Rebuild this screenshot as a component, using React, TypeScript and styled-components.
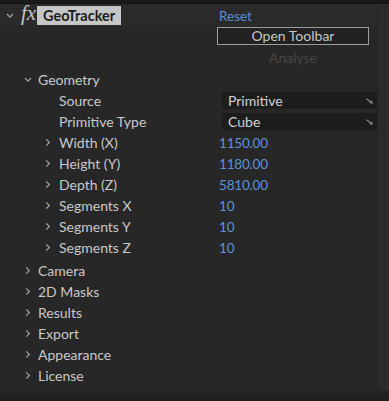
import styled, { createGlobalStyle } from "styled-components";

const GlobalStyle = createGlobalStyle`
  html, body {
    margin: 0;
    padding: 0;
    background: #1f1f1f;
  }
  * {
    box-sizing: border-box;
  }
`;

type Prop = {
  label: string;
  depth: number;
  twirl?: boolean;
  open?: boolean;
  value?: string;
  menu?: string;
};

const geometry: Prop[] = [
  { label: "Source", depth: 2, menu: "Primitive" },
  { label: "Primitive Type", depth: 2, menu: "Cube" },
  { label: "Width (X)", depth: 2, twirl: true, value: "1150.00" },
  { label: "Height (Y)", depth: 2, twirl: true, value: "1180.00" },
  { label: "Depth (Z)", depth: 2, twirl: true, value: "5810.00" },
  { label: "Segments X", depth: 2, twirl: true, value: "10" },
  { label: "Segments Y", depth: 2, twirl: true, value: "10" },
  { label: "Segments Z", depth: 2, twirl: true, value: "10" },
];

const groups = ["Camera", "2D Masks", "Results", "Export", "Appearance", "License"];

const Chevron = ({ open }: { open?: boolean }) => (
  <svg width="8" height="9" viewBox="0 0 8 9">
    {open ? (
      <path d="M1 3 L4 6.2 L7 3" fill="none" stroke="#a3a3a3" strokeWidth="1.2" />
    ) : (
      <path d="M2.2 1.3 L5.4 4.5 L2.2 7.7" fill="none" stroke="#a3a3a3" strokeWidth="1.2" />
    )}
  </svg>
);

const MenuMark = () => (
  <svg width="7" height="6" viewBox="0 0 7 6">
    <path d="M0.5 0.8 L6 5" fill="none" stroke="#8a8a8a" strokeWidth="1.3" />
    <path d="M3.5 4.6 L6.3 5.2 L5.6 2.6" fill="none" stroke="#8a8a8a" strokeWidth="1" />
  </svg>
);

const Row = ({ p }: { p: Prop }) => (
  <PropRow>
    <LabelCell $depth={p.depth}>
      <Twirl $depth={p.depth}>{p.twirl && <Chevron open={p.open} />}</Twirl>
      <LabelText>{p.label}</LabelText>
    </LabelCell>
    <ValueCell>
      {p.menu && (
        <Dropdown>
          <span>{p.menu}</span>
          <MenuMark />
        </Dropdown>
      )}
      {p.value && <Number>{p.value}</Number>}
    </ValueCell>
  </PropRow>
);

const App = () => {
  return (
    <>
      <GlobalStyle />
      <Frame>
        <TopStrip />
        <Body>
          <Main>
            <Header>
              <HeaderLeft>
                <HeaderTwirl>
                  <Chevron open />
                </HeaderTwirl>
                <Fx>fx</Fx>
                <EffectName>GeoTracker</EffectName>
              </HeaderLeft>
              <ValueCell>
                <Reset>Reset</Reset>
              </ValueCell>
            </Header>
            <ButtonRow>
              <ToolbarButton>Open Toolbar</ToolbarButton>
            </ButtonRow>
            <ButtonRow>
              <DisabledButton>Analyse</DisabledButton>
            </ButtonRow>
            <Props>
              <Row p={{ label: "Geometry", depth: 1, twirl: true, open: true }} />
              {geometry.map((p) => (
                <Row key={p.label} p={p} />
              ))}
              <Groups>
                {groups.map((g) => (
                  <Row key={g} p={{ label: g, depth: 1, twirl: true }} />
                ))}
              </Groups>
            </Props>
          </Main>
          <ScrollTrack />
        </Body>
        <BottomShade />
      </Frame>
    </>
  );
};

const Frame = styled.div`
  width: 389px;
  height: 401px;
  display: flex;
  flex-direction: column;
  background: #272727;
  font-family: Lato, "Noto Sans", sans-serif;
  color: #c9c9c9;
  overflow: hidden;
`;

const TopStrip = styled.div`
  height: 4px;
  background: #191919;
  border-bottom: 1px solid #141414;
`;

const Body = styled.div`
  flex: 1;
  display: flex;
`;

const Main = styled.div`
  flex: 1;
  display: flex;
  flex-direction: column;
`;

const ScrollTrack = styled.div`
  width: 12px;
  background: #2b2b2b;
  border-left: 1px solid #252525;
`;

const BottomShade = styled.div`
  height: 10px;
  background: linear-gradient(#232323, #1e1e1e);
`;

const Header = styled.div`
  display: grid;
  grid-template-columns: 218px 1fr;
  height: 22px;
  align-items: center;
  background: #2a2a2a;
`;

const HeaderLeft = styled.div`
  display: flex;
  align-items: center;
  height: 100%;
`;

const HeaderTwirl = styled.span`
  width: 21px;
  padding-left: 6px;
  display: flex;
  align-items: center;
`;

const Fx = styled.span`
  font-family: "Liberation Serif", serif;
  font-style: italic;
  font-size: 21px;
  color: #c4c4c4;
  width: 16px;
  line-height: 1;
  margin-top: -3px;
`;

const EffectName = styled.span`
  height: 19px;
  padding: 0 6px;
  background: #c6c6c6;
  color: #1c1c1c;
  font-weight: 700;
  font-size: 14.5px;
  line-height: 19px;
`;

const ValueCell = styled.div`
  display: flex;
  align-items: center;
  height: 100%;
  padding-left: 1px;
`;

const Reset = styled.span`
  color: #5b8fd3;
  font-size: 13.5px;
  margin-top: 2px;
`;

const ButtonRow = styled.div`
  padding-left: 217px;
  height: 22px;
  display: flex;
  align-items: center;
`;

const ToolbarButton = styled.div`
  width: 152px;
  height: 18px;
  margin-top: -3px;
  border: 1.5px solid #9d9d9d;
  background: #212121;
  color: #c6c6c6;
  font-size: 14px;
  line-height: 15px;
  text-align: center;
`;

const DisabledButton = styled.div`
  width: 152px;
  color: #454545;
  font-size: 14px;
  text-align: center;
  margin-top: -3px;
`;

const Props = styled.div`
  display: flex;
  flex-direction: column;
  margin-top: -1px;
`;

const Groups = styled.div`
  display: flex;
  flex-direction: column;
  margin-top: 2px;
`;

const PropRow = styled.div`
  display: grid;
  grid-template-columns: 218px 1fr;
  height: 21px;
  align-items: center;
`;

const LabelCell = styled.div<{ $depth: number }>`
  display: flex;
  align-items: center;
  padding-left: ${(p) => (p.$depth === 1 ? 24 : 44)}px;
`;

const Twirl = styled.span<{ $depth: number }>`
  width: ${(p) => (p.$depth === 1 ? 14 : 15)}px;
  display: flex;
  align-items: center;
`;

const LabelText = styled.span`
  font-size: 14px;
  color: #c9c9c9;
  white-space: nowrap;
`;

const Dropdown = styled.div`
  width: 155px;
  height: 17px;
  margin-left: 3px;
  padding: 0 4px 0 6px;
  display: flex;
  align-items: center;
  justify-content: space-between;
  background: #1d1d1d;
  font-size: 14px;
  color: #d2d2d2;
`;

const Number = styled.span`
  color: #5d93d6;
  font-size: 13.5px;
  letter-spacing: -0.2px;
`;

export default App;
